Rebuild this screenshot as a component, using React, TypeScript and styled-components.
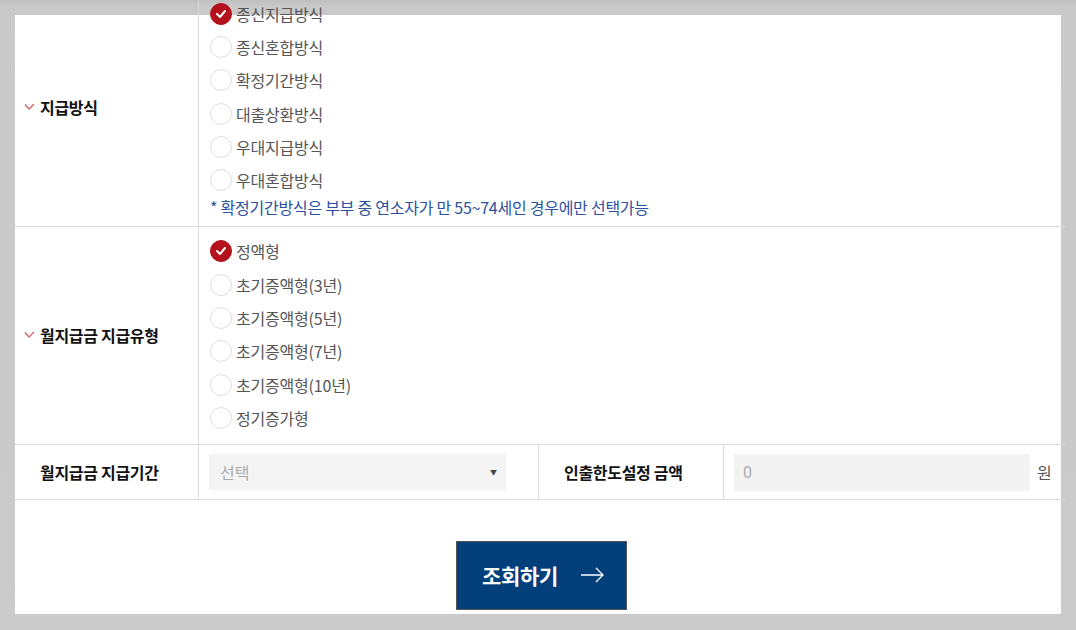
import styled, { createGlobalStyle } from "styled-components";

const GlobalStyle = createGlobalStyle`
  html, body {
    margin: 0;
    padding: 0;
    height: 100%;
  }
  body {
    background: linear-gradient(to bottom, #bfbfbf 0px, #c9c9c9 6px, #cbcbcb 100%);
    font-family: "Noto Sans CJK KR", "Noto Sans", sans-serif;
    overflow: hidden;
  }
`;

const Page = styled.div`
  padding: 15px 15px 16px 15px;
  height: 630px;
  box-sizing: border-box;
`;

const Panel = styled.div`
  display: flex;
  flex-direction: column;
  background: #fff;
  width: 1046px;
  height: 599px;
  overflow: visible;
`;

const Table = styled.div`
  width: 1050px;
  margin-top: -26px;
`;

const Row = styled.div<{ $cols?: string }>`
  display: grid;
  grid-template-columns: ${(p) => p.$cols || "184px 1fr"};
  border-bottom: 1px solid #dcdcdc;
`;

const Label = styled.div`
  position: relative;
  display: flex;
  align-items: center;
  padding-left: 25px;
  border-right: 1px solid #dcdcdc;
  font-size: 16px;
  font-weight: 700;
  color: #111;
  letter-spacing: -0.3px;
`;

const CheckMark = styled.svg`
  position: absolute;
  left: 9px;
  top: 50%;
  margin-top: -4px;
`;

const Options = styled.div`
  padding: 8px 0 9px 11px;
  display: flex;
  flex-direction: column;
`;

const Option = styled.label`
  display: flex;
  align-items: center;
  gap: 4px;
  height: 33.3px;
  font-size: 16px;
  color: #555;
  letter-spacing: -0.2px;
`;

const Circle = styled.span<{ $on?: boolean }>`
  width: 22px;
  height: 22px;
  box-sizing: border-box;
  border-radius: 50%;
  border: 1px solid ${(p) => (p.$on ? "#b3121d" : "#dedede")};
  background: ${(p) => (p.$on ? "#b3121d" : "#fff")};
  display: flex;
  align-items: center;
  justify-content: center;
`;

const Note = styled.p`
  margin: 0;
  height: 20px;
  line-height: 20px;
  font-size: 16px;
  color: #2c50a0;
  letter-spacing: -0.25px;
`;

const Cell = styled.div<{ $border?: boolean }>`
  display: flex;
  align-items: center;
  padding: 9px 10px 8px 10px;
  border-right: ${(p) => (p.$border ? "1px solid #dcdcdc" : "none")};
  gap: 7px;
`;

const Select = styled.div`
  width: 297px;
  height: 36px;
  box-sizing: border-box;
  background: #f4f4f4;
  display: flex;
  align-items: center;
  justify-content: space-between;
  padding: 0 9px 0 11px;
  font-size: 16px;
  color: #aaa;
`;

const Caret = styled.span`
  font-size: 7px;
  color: #444;
`;

const Input = styled.div`
  width: 296px;
  height: 37px;
  box-sizing: border-box;
  background: #f3f3f3;
  display: flex;
  align-items: center;
  padding-left: 9px;
  font-size: 16px;
  color: #aaa;
  font-family: "Roboto", "Noto Sans", sans-serif;
`;

const Unit = styled.span`
  font-size: 16px;
  color: #555;
`;

const ButtonRow = styled.div`
  display: flex;
  justify-content: center;
  padding-top: 41px;
  padding-left: 7px;
`;

const Button = styled.button`
  width: 171px;
  height: 69px;
  background: #033f7b;
  border: 1px solid #555;
  color: #fff;
  font-family: "Noto Sans CJK KR", sans-serif;
  font-size: 21px;
  font-weight: 700;
  display: flex;
  align-items: center;
  justify-content: center;
  gap: 22px;
  padding: 0 0 0 4px;
  letter-spacing: -0.3px;
`;

function Tick() {
  return (
    <svg width="12" height="10" viewBox="0 0 12 10">
      <polyline points="2,5 5,8 10,2" fill="none" stroke="#fff" strokeWidth="2" strokeLinecap="round" strokeLinejoin="round" />
    </svg>
  );
}

function LabelCheck() {
  return (
    <CheckMark width="11" height="8" viewBox="0 0 11 8">
      <polyline points="1,1.5 5,6 10,1" fill="none" stroke="#d4606c" strokeWidth="1.3" />
    </CheckMark>
  );
}

function RadioList({ items, checked }: { items: string[]; checked: number }) {
  return (
    <>
      {items.map((t, i) => (
        <Option key={t}>
          <Circle $on={i === checked}>{i === checked && <Tick />}</Circle>
          {t}
        </Option>
      ))}
    </>
  );
}

export default function App() {
  return (
    <>
      <GlobalStyle />
      <Page>
        <Panel>
          <Table>
            <Row>
              <Label>
                <LabelCheck />
                지급방식
              </Label>
              <Options>
                <RadioList
                  checked={0}
                  items={["종신지급방식", "종신혼합방식", "확정기간방식", "대출상환방식", "우대지급방식", "우대혼합방식"]}
                />
                <Note>* 확정기간방식은 부부 중 연소자가 만 55~74세인 경우에만 선택가능</Note>
              </Options>
            </Row>
            <Row>
              <Label>
                <LabelCheck />
                월지급금 지급유형
              </Label>
              <Options>
                <RadioList
                  checked={0}
                  items={["정액형", "초기증액형(3년)", "초기증액형(5년)", "초기증액형(7년)", "초기증액형(10년)", "정기증가형"]}
                />
              </Options>
            </Row>
            <Row $cols="184px 340px 185px 1fr">
              <Label>월지급금 지급기간</Label>
              <Cell $border>
                <Select>
                  선택
                  <Caret>▼</Caret>
                </Select>
              </Cell>
              <Label>인출한도설정 금액</Label>
              <Cell>
                <Input>0</Input>
                <Unit>원</Unit>
              </Cell>
            </Row>
          </Table>
          <ButtonRow>
            <Button>
              조회하기
              <svg width="25" height="16" viewBox="0 0 25 16">
                <path d="M1 8 H23 M16 1 L23 8 L16 15" fill="none" stroke="#fff" strokeWidth="1.3" />
              </svg>
            </Button>
          </ButtonRow>
        </Panel>
      </Page>
    </>
  );
}
